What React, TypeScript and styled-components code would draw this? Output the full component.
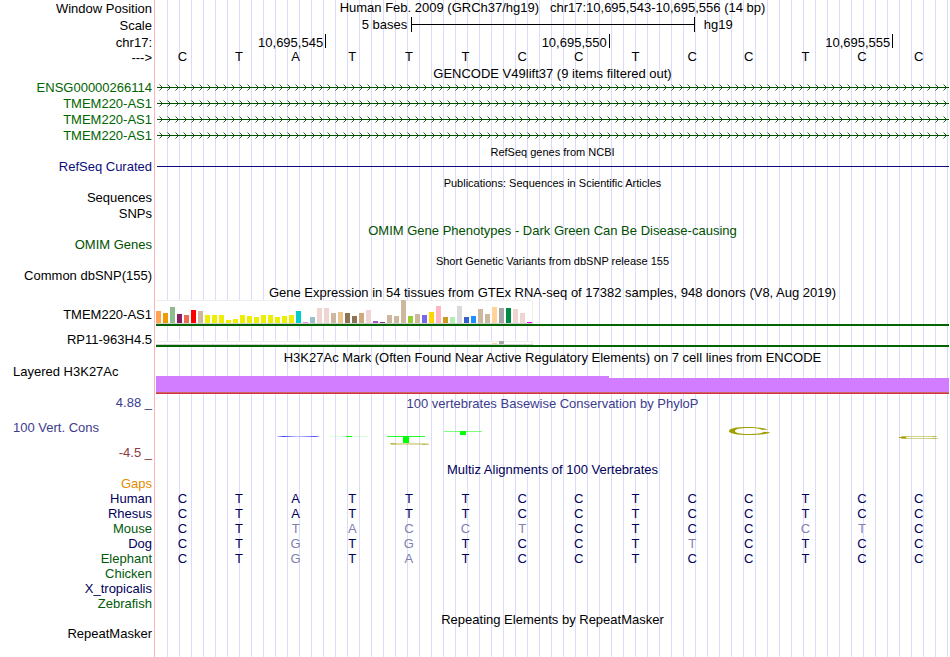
import React from 'react';
import styled, { createGlobalStyle } from 'styled-components';

const colors = {
  text: '#000000',
  gencode: '#006400',
  refseq: '#0c0c78',
  omim: '#005000',
  phylop: '#3c3c8c',
  phylopNegative: '#8c3c3c',
  gaps: '#e68a00',
  species: '#00005a',
  speciesAlt: '#005a0a',
  mismatch: '#8080b0',
  grid: '#dcdcfa',
  divider: '#ffb4b4',
};

const GlobalStyle = createGlobalStyle`
  body {
    margin: 0;
    background: #ffffff;
    font-family: 'Liberation Sans', Arial, Helvetica, sans-serif;
    font-size: 13px;
    line-height: 15px;
    color: ${colors.text};
  }
`;

const Browser = styled.main`
  position: relative;
  box-sizing: border-box;
  min-height: 100vh;
  padding-right: 1px;
  overflow: hidden;
`;

const GridLines = styled.div`
  position: absolute;
  inset: 0 1px 0 154px;
  border-left: 1px solid ${colors.divider};
  background: repeating-linear-gradient(
    to right,
    ${colors.grid} 0,
    ${colors.grid} 1px,
    transparent 1px,
    transparent 12px
  ) 12px 0 no-repeat;
`;

const Row = styled.div<{ $height: number }>`
  position: relative;
  display: grid;
  grid-template-columns: 156px 1fr;
  height: ${props => props.$height}px;
  white-space: nowrap;
`;

const Label = styled.div<{ $color?: string; $top?: number; $end?: boolean; $left?: boolean }>`
  align-self: ${props => (props.$end ? 'end' : 'start')};
  padding-top: ${props => props.$top ?? 0}px;
  padding-right: 4px;
  padding-left: 13px;
  text-align: ${props => (props.$left ? 'left' : 'right')};
  color: ${props => props.$color ?? colors.text};
`;

const Track = styled.div`
  grid-column: 2;
  min-width: 0;
`;

const Title = styled.div<{ $color?: string; $small?: boolean }>`
  height: 15px;
  line-height: 17px;
  font-size: ${props => (props.$small ? 11 : 13)}px;
  text-align: center;
  white-space: pre;
  color: ${props => props.$color ?? colors.text};
`;

const WindowTitle = styled(Title)`
  line-height: 15px;
`;

const ScaleBar = styled.div`
  display: grid;
  grid-template-columns: 9fr 10fr 9fr;
  margin-right: -1px;
  padding-top: 1px;
`;

const ScaleText = styled.span<{ $before?: boolean }>`
  padding: 0 ${props => (props.$before ? 4 : 9)}px;
  text-align: ${props => (props.$before ? 'right' : 'left')};
`;

const ScaleLine = styled.div`
  display: flex;
  align-items: center;
  height: 15px;
  border: solid #000000;
  border-width: 0 1px;

  &::before {
    content: '';
    flex: 1;
    height: 1px;
    background: #000000;
  }
`;

const Ruler = styled.div`
  display: grid;
  grid-template-columns: 3fr 5fr 5fr 1fr;
  margin-right: -1px;
  padding-top: 1px;
`;

const RulerMark = styled.span`
  height: 14px;
  padding-right: 2px;
  border-right: 1px solid #000000;
  line-height: 17px;
  text-align: right;
`;

const BaseRow = styled.div<{ $color?: string; $tight?: boolean }>`
  display: grid;
  grid-template-columns: repeat(14, 1fr);
  line-height: ${props => (props.$tight ? 13 : 15)}px;
  color: ${props => props.$color ?? colors.text};
`;

const Base = styled.span<{ $mismatch?: boolean }>`
  padding-right: 4px;
  text-align: center;
  color: ${props => (props.$mismatch ? colors.mismatch : 'inherit')};
`;

const Intron = styled.svg`
  display: block;
  width: 100%;
  height: 16px;
`;

const GeneLine = styled.div`
  height: 1px;
  margin: 7px 0 0 1px;
  background: ${colors.refseq};
`;

const Expression = styled(Track)`
  display: flex;
  flex-direction: column;
  align-items: flex-start;
  padding-top: 1px;
`;

const BarBox = styled.div<{ $height: number }>`
  display: flex;
  align-items: flex-end;
  gap: 2px;
  box-sizing: border-box;
  height: ${props => props.$height}px;
  padding-right: 1px;
  background: #ffffff;
  box-shadow: inset -1px 1px 0 #eeeeee;
  border-bottom: 1px solid #d0d0d0;
`;

const Bar = styled.div`
  width: 5px;
`;

const ModelLine = styled.div`
  width: 100%;
  height: 2px;
  background: ${colors.gencode};
`;

const LowExpression = styled(Expression)`
  padding-top: 15px;
`;

const Signal = styled.div`
  display: grid;
  grid-template-columns: 8fr 6fr;
  align-items: end;
  height: 17px;
  margin-top: 12px;
  border-bottom: 1px solid #d23246;
  box-shadow: inset 0 -1px 0 #cd6464;
`;

const SignalStep = styled.div<{ $height: number }>`
  height: ${props => props.$height}px;
  margin-bottom: 1px;
  background: #d27dff;
`;

const AxisLabels = styled.div`
  display: grid;
  align-content: space-between;
  height: 65px;
`;

const AxisPlot = styled.svg`
  display: block;
  width: 100%;
  height: 50px;
`;

const tissueBars: [string, number][] = [
  ['#ffa54f', 12], ['#ee9a00', 10], ['#8fbc8f', 16], ['#8b1c62', 9], ['#ee6a50', 8], ['#ff0000', 13],
  ['#cdb79e', 12], ['#eeee00', 8], ['#eeee00', 8], ['#eeee00', 8], ['#eeee00', 3], ['#eeee00', 4],
  ['#eeee00', 8], ['#eeee00', 7], ['#eeee00', 6], ['#eeee00', 8], ['#eeee00', 8], ['#eeee00', 6],
  ['#eeee00', 7], ['#eeee00', 8], ['#00cdcd', 12], ['#ee82ee', 1], ['#9ac0cd', 6], ['#eed5d2', 15],
  ['#eed5d2', 15], ['#cdb79e', 10], ['#eec591', 11], ['#8b7355', 10], ['#8b7355', 7], ['#cdaa7d', 10],
  ['#eed5d2', 13], ['#b452cd', 2], ['#7a378b', 1], ['#cdb79e', 8], ['#cdb79e', 7], ['#cdb79e', 23],
  ['#9acd32', 7], ['#cdb79e', 9], ['#7a67ee', 8], ['#ffd700', 11], ['#ffb6c1', 17], ['#cd9b1d', 6],
  ['#b4eeb4', 6], ['#d9d9d9', 17], ['#3a5fcd', 6], ['#1e90ff', 7], ['#cdb79e', 14], ['#cdb79e', 9],
  ['#ffd39b', 16], ['#a6a6a6', 15], ['#008b45', 15], ['#eed5d2', 14], ['#eed5d2', 10], ['#ff00ff', 1],
];

const lowBars = tissueBars.map(([color], i): [string, number] => [color, i === 48 ? 1 : i === 49 ? 3 : 0]);

const genes = ['ENSG00000266114', 'TMEM220-AS1', 'TMEM220-AS1', 'TMEM220-AS1'];

const reference = 'CTATTTCCTCCTCC';

const alignments = [
  { name: 'Human', bases: 'CTATTTCCTCCTCC' },
  { name: 'Rhesus', bases: 'CTATTTCCTCCTCC' },
  { name: 'Mouse', bases: 'CTTACCTCTCCCTC', alt: true },
  { name: 'Dog', bases: 'CTGTGTCCTTCTCC' },
  { name: 'Elephant', bases: 'CTGTATCCTCCTCC', alt: true },
  { name: 'Chicken', bases: '', alt: true },
  { name: 'X_tropicalis', bases: '' },
  { name: 'Zebrafish', bases: '', alt: true },
];

interface TitleRowProps {
  children: React.ReactNode;
  color?: string;
  small?: boolean;
}

const TitleRow: React.FC<TitleRowProps> = ({ children, color, small }) => (
  <Row $height={15}>
    <Track>
      <Title $color={color} $small={small}>{children}</Title>
    </Track>
  </Row>
);

const Bases: React.FC<{ bases: string; color?: string; tight?: boolean }> = ({ bases, color, tight }) => (
  <BaseRow $color={color} $tight={tight}>
    {bases.split('').map((base, i) => (
      <Base key={i} $mismatch={base !== reference[i]}>{base}</Base>
    ))}
  </BaseRow>
);

const Bars: React.FC<{ bars: [string, number][]; height: number }> = ({ bars, height }) => (
  <BarBox $height={height}>
    {bars.map(([background, barHeight], i) => (
      <Bar key={i} style={{ background, height: barHeight }} />
    ))}
  </BarBox>
);

const IntronLine: React.FC<{ id: string }> = ({ id }) => (
  <Intron aria-hidden="true">
    <defs>
      <pattern id={id} x="2" width="8" height="16" patternUnits="userSpaceOnUse">
        <path d="M1.5 4.5 L4.5 7.5 L1.5 10.5" fill="none" stroke="#005000" strokeWidth="0.9" />
      </pattern>
    </defs>
    <rect x="2" width="100%" height="16" fill={`url(#${id})`} />
    <rect x="1" y="7" width="100%" height="1" fill="#005000" />
  </Intron>
);

// Positive and negative scores share the baseline at y=26
const ConservationPlot: React.FC = () => (
  <AxisPlot viewBox="0 0 793 50" preserveAspectRatio="none" aria-hidden="true">
    <defs>
      <linearGradient id="fade">
        <stop offset="0" stopColor="#5050ff" stopOpacity="0.3" />
        <stop offset="0.15" stopColor="#4040ff" />
        <stop offset="0.5" stopColor="#6464ff" stopOpacity="0.4" />
        <stop offset="0.9" stopColor="#4040ff" stopOpacity="0.9" />
        <stop offset="1" stopColor="#5050ff" stopOpacity="0.5" />
      </linearGradient>
    </defs>
    <rect x="121" y="26" width="42" height="1" fill="url(#fade)" />

    <rect x="174" y="26" width="38" height="1" fill="#00ff00" opacity="0.15" />
    <rect x="190" y="26" width="6" height="1" fill="#00ff00" />

    <rect x="231" y="26" width="38" height="1" fill="#28ff28" />
    <rect x="247" y="26" width="6" height="7" fill="#00ff00" />
    <path d="M234 33.5 H272 M239 34.5 H270" stroke="#a0a000" strokeWidth="1" opacity="0.35" />
    <path d="M234 33.5 H240 M235 34.5 H239 M266 34.5 H273" stroke="#a0a000" strokeWidth="1" opacity="0.5" />

    <rect x="288" y="21" width="38" height="1" fill="#00ff00" opacity="0.5" />
    <rect x="304" y="21" width="6" height="4" fill="#00ff00" />

    <path
      d="M612 19.5 C608 18 600 17 592 17 C580 17 573 18.5 573 21 C573 23.5 581 25 593 25 C604 25 613 24 614 22.2 L608 21.8 C606 23.5 600 24 593 24 C584 24 579 23 579 21 C579 19 584 18 592 18 C599 18 605 18.8 606 20 Z"
      fill="#a0a000"
    />

    <path d="M746 26.5 H780 M746 28.5 H780" stroke="#a0a000" strokeWidth="1" opacity="0.45" />
    <path d="M743 27.5 H750" stroke="#a0a000" strokeWidth="1" />
    <path d="M745 26.5 H751 M745 28.5 H751 M776 26.5 H781 M776 28.5 H782" stroke="#a0a000" strokeWidth="1" opacity="0.4" />
  </AxisPlot>
);

export default function App() {
  return (
    <>
      <GlobalStyle />
      <Browser>
        <GridLines />

        <Row $height={16}>
          <Label $end>Window Position</Label>
          <Track>
            <WindowTitle>{'Human Feb. 2009 (GRCh37/hg19)   chr17:10,695,543-10,695,556 (14 bp)'}</WindowTitle>
          </Track>
        </Row>
        <Row $height={17}>
          <Label $end>Scale</Label>
          <Track>
            <ScaleBar>
              <ScaleText $before>5 bases</ScaleText>
              <ScaleLine />
              <ScaleText>hg19</ScaleText>
            </ScaleBar>
          </Track>
        </Row>
        <Row $height={17}>
          <Label $end>chr17:</Label>
          <Track>
            <Ruler>
              <RulerMark>10,695,545</RulerMark>
              <RulerMark>10,695,550</RulerMark>
              <RulerMark>10,695,555</RulerMark>
            </Ruler>
          </Track>
        </Row>
        <Row $height={15}>
          <Label>{'--->'}</Label>
          <Track>
            <Bases bases={reference} tight />
          </Track>
        </Row>

        <TitleRow>GENCODE V49lift37 (9 items filtered out)</TitleRow>
        {genes.map((gene, i) => (
          <Row $height={16} key={i}>
            <Label $color={colors.gencode}>{gene}</Label>
            <Track>
              <IntronLine id={`strand-${i}`} />
            </Track>
          </Row>
        ))}

        <TitleRow small>RefSeq genes from NCBI</TitleRow>
        <Row $height={16}>
          <Label $color={colors.refseq}>RefSeq Curated</Label>
          <Track>
            <GeneLine />
          </Track>
        </Row>

        <TitleRow small>Publications: Sequences in Scientific Articles</TitleRow>
        <Row $height={16}>
          <Label>Sequences</Label>
        </Row>
        <Row $height={16}>
          <Label>SNPs</Label>
        </Row>

        <TitleRow color={colors.omim}>OMIM Gene Phenotypes - Dark Green Can Be Disease-causing</TitleRow>
        <Row $height={16}>
          <Label $color={colors.omim}>OMIM Genes</Label>
        </Row>

        <TitleRow small>Short Genetic Variants from dbSNP release 155</TitleRow>
        <Row $height={16}>
          <Label>Common dbSNP(155)</Label>
        </Row>

        <TitleRow>Gene Expression in 54 tissues from GTEx RNA-seq of 17382 samples, 948 donors (V8, Aug 2019)</TitleRow>
        <Row $height={27}>
          <Label $top={8}>TMEM220-AS1</Label>
          <Expression>
            <Bars bars={tissueBars} height={24} />
            <ModelLine />
          </Expression>
        </Row>
        <Row $height={23}>
          <Label $top={6}>RP11-963H4.5</Label>
          <LowExpression>
            <Bars bars={lowBars} height={4} />
            <ModelLine />
          </LowExpression>
        </Row>

        <TitleRow>H3K27Ac Mark (Often Found Near Active Regulatory Elements) on 7 cell lines from ENCODE</TitleRow>
        <Row $height={31}>
          <Label $left>Layered H3K27Ac</Label>
          <Track>
            <Signal>
              <SignalStep $height={16} />
              <SignalStep $height={14} />
            </Signal>
          </Track>
        </Row>

        <Row $height={66}>
          <AxisLabels>
            <Label $color={colors.phylop}>4.88 _</Label>
            <Label $color={colors.phylop} $left>100 Vert. Cons</Label>
            <Label $color={colors.phylopNegative}>-4.5 _</Label>
          </AxisLabels>
          <Track>
            <Title $color={colors.phylop}>100 vertebrates Basewise Conservation by PhyloP</Title>
            <ConservationPlot />
          </Track>
        </Row>

        <TitleRow color={colors.species}>Multiz Alignments of 100 Vertebrates</TitleRow>
        <Row $height={15}>
          <Label $color={colors.gaps}>Gaps</Label>
        </Row>
        {alignments.map(({ name, bases, alt }) => (
          <Row $height={15} key={name}>
            <Label $color={alt ? colors.speciesAlt : colors.species}>{name}</Label>
            <Track>
              <Bases bases={bases} color={colors.species} />
            </Track>
          </Row>
        ))}

        <TitleRow>Repeating Elements by RepeatMasker</TitleRow>
        <Row $height={15}>
          <Label>RepeatMasker</Label>
        </Row>
      </Browser>
    </>
  );
}
